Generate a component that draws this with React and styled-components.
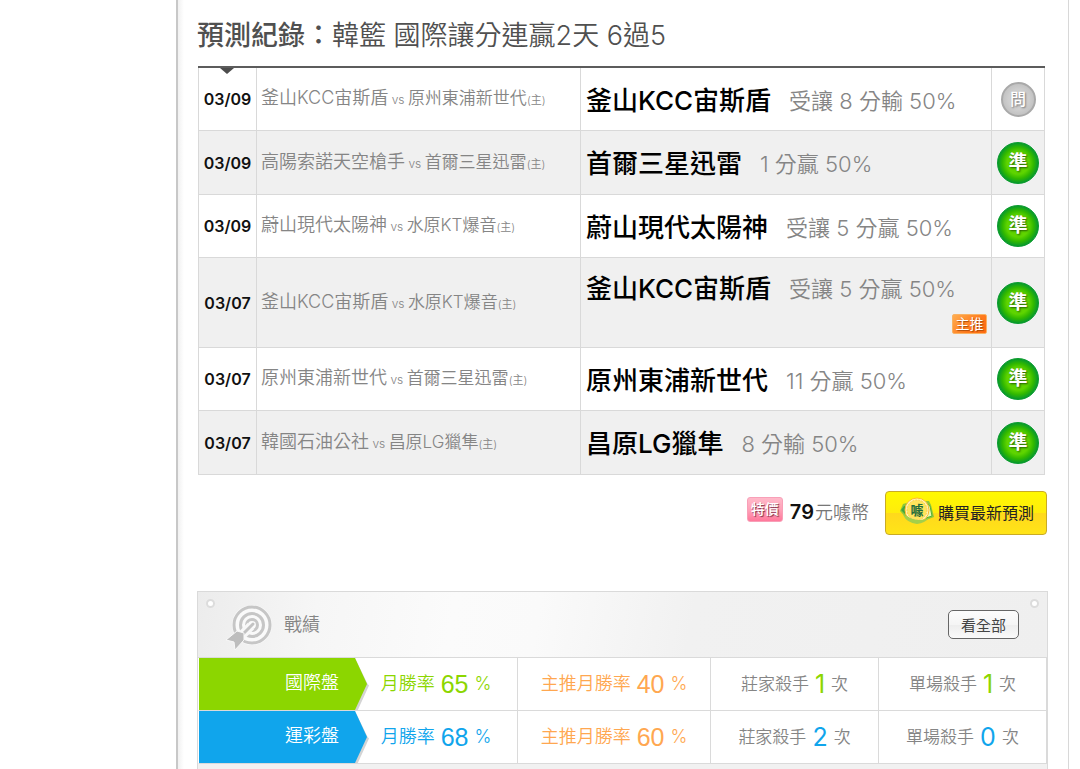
import React from "react";
import styled, { createGlobalStyle } from "styled-components";

const GlobalStyle = createGlobalStyle`
  *, *::before, *::after { box-sizing: border-box; }
  body {
    margin: 0;
    background: #fff;
    color: #858585;
    font-family: Inter, "Noto Sans CJK TC", sans-serif;
    font-weight: 350;
    font-size: 17px;
  }
  table { border-collapse: separate; border-spacing: 0; width: 100%; table-layout: fixed; }
  td, th { padding: 0; font-weight: inherit; }
`;

const Page = styled.div`
  display: flex;
  min-height: 100vh;
  padding: 0 11px 0 176px;
`;

const Main = styled.main`
  flex: 1;
  min-width: 0;
  display: flex;
  flex-direction: column;
  padding: 16px 20px 0 19px;
  border-left: 2px solid #c8c8c8;
  border-right: 1px solid #d8d8d8;
  background: linear-gradient(to right, #f1f1f1, #fff 6px);
`;

const Title = styled.h1`
  margin: 0;
  height: 50px;
  line-height: 40px;
  font-size: 27px;
  font-weight: 350;
  color: #505050;
`;

const Strong = styled.strong`
  font-weight: 500;
`;

const RecordPanel = styled.section`
  position: relative;
  margin: 0 3px 0 1px;
  border-top: 2px solid #5c5c5c;
`;

const Caret = styled.span`
  position: absolute;
  top: 0;
  left: 22px;
  border: 7px solid transparent;
  border-top: 6px solid #4c4c4c;
  border-bottom: 0;
`;

const rowHeight = (p) => (p.$tall ? 90 : p.$shade ? 64 : 63);

const RecordRow = styled.tr`
  height: ${rowHeight}px;
  background: ${(p) => (p.$shade ? "#f0f0f0" : "#fff")};
`;

const RecordCell = styled.td`
  border-right: 1px solid #d9d9d9;
  border-bottom: 1px solid #d9d9d9;
  padding-left: ${(p) => p.$pad || 0}px;
  text-align: ${(p) => p.$align || "left"};
  vertical-align: middle;
  white-space: nowrap;
  line-height: 30px;
  &:first-child { border-left: 1px solid #d9d9d9; }
`;

const DateText = styled.time`
  font-size: 16px;
  font-weight: 600;
  color: #111;
`;

const Home = styled.span`
  font-size: ${(p) => (p.$first ? 18 : 17)}px;
`;

const Small = styled.span`
  font-size: ${(p) => (p.$mark ? 11 : 12)}px;
`;

const PickLine = styled.div`
  display: flex;
  align-items: center;
  gap: 18px;
  padding-top: 3px;
`;

const Pick = styled.strong`
  font-size: 26px;
  font-weight: 500;
  color: #000;
`;

const Detail = styled.span`
  font-size: 22px;
`;

const TagLine = styled.div`
  display: flex;
  justify-content: flex-end;
  padding: 10px 4px 0 0;
`;

const Tag = styled.span`
  width: 35px;
  height: 20px;
  border: 1px solid #f9b263;
  border-radius: 2px;
  background: linear-gradient(135deg, #ffad50, #ff7a1c 60%, #ff6a10);
  color: #fff;
  font-size: 14px;
  font-weight: 400;
  line-height: 17px;
  text-align: center;
  text-shadow: 1px 1px 1px #a84a08;
`;

const Badge = styled.span`
  display: inline-flex;
  align-items: center;
  justify-content: center;
  vertical-align: middle;
  width: ${(p) => (p.$pending ? 35 : 42)}px;
  height: ${(p) => (p.$pending ? 35 : 42)}px;
  border-radius: 50%;
  border: ${(p) => (p.$pending ? "2px solid #a9a9a9" : "1px solid #089a2c")};
  background: ${(p) =>
    p.$pending
      ? "radial-gradient(circle, #cfcfcf 45%, #b4b4b4)"
      : "radial-gradient(circle closest-side, #5fd400 55%, #31b800 78%, #089a2c)"};
  color: #fff;
  font-size: ${(p) => (p.$pending ? 16 : 19)}px;
  font-weight: ${(p) => (p.$pending ? 500 : 700)};
  text-shadow: 1px 1px 2px ${(p) => (p.$pending ? "#777" : "#245c00")};
`;

const BuyBar = styled.div`
  display: flex;
  justify-content: flex-end;
  align-items: center;
  height: 44px;
  margin: 16px 1px 56px 0;
`;

const SaleTag = styled.span`
  width: 36px;
  height: 25px;
  margin: 0 7px 8px 0;
  border: 1px solid #f8a0b8;
  border-radius: 3px;
  background: linear-gradient(#ffb9c9, #ff9fb6 55%, #ff789b);
  color: #fff;
  font-size: 14px;
  font-weight: 500;
  line-height: 22px;
  text-align: center;
  text-shadow: 1px 1px 1px #803048;
`;

const Price = styled.span`
  font-size: 18px;
  line-height: 24px;
  margin-right: 16px;
  padding-bottom: 2px;
  color: #777;
`;

const Amount = styled.strong`
  font-size: 20px;
  font-weight: 600;
  color: #111;
  margin-right: 1px;
`;

const BuyButton = styled.button`
  display: flex;
  align-items: center;
  gap: 2px;
  height: 44px;
  padding: 0 12px 2px 12px;
  border: 1px solid #c9ab25;
  border-radius: 4px;
  background: linear-gradient(#fff900, #ffec0c 50%, #ffd91c 51%, #ffe418);
  color: #222;
  font: inherit;
  font-weight: 400;
  font-size: 16px;
  white-space: nowrap;
`;

const StatsPanel = styled.section`
  flex: 1;
  border: 1px solid #dadada;
  border-bottom: 0;
  background: #f1f1f1;
`;

const StatsHeader = styled.header`
  position: relative;
  display: flex;
  align-items: center;
  height: 66px;
  padding: 0 28px 0 28px;
  border-bottom: 1px solid #dadada;
  background: linear-gradient(100deg, #ececec, #f6f6f6 14%, #fbfbfb 30%, #fafafa 40%, #f1f1f1 58%, #efefef);
`;

const Pin = styled.span`
  position: absolute;
  top: 7px;
  ${(p) => p.$side}: 8px;
  width: 9px;
  height: 9px;
  border: 2px solid #dcdcdc;
  border-radius: 50%;
  background: #fff;
`;

const StatsTitle = styled.h2`
  flex: 1;
  margin: 0 0 0 10px;
  padding-bottom: 3px;
  font-size: 18px;
  font-weight: 350;
`;

const ViewAll = styled.button`
  width: 71px;
  height: 29px;
  padding: 0;
  border: 1px solid #666;
  border-radius: 5px;
  background: linear-gradient(#fcfcfc, #f5f5f5 50%, #ededed 51%, #fafafa);
  color: #444;
  font: inherit;
  font-weight: 400;
  font-size: 15px;
`;

const StatRow = styled.tr`
  height: 53px;
  background: #fff;
`;

const StatCell = styled.td`
  border-right: 1px solid #dadada;
  border-bottom: 1px solid #dadada;
  text-align: center;
  white-space: nowrap;
  color: ${(p) => p.$color};
`;

const Metric = styled.div`
  display: flex;
  align-items: center;
  justify-content: center;
  gap: 6px;
  line-height: 26px;
  font-size: ${(p) => (p.$large ? 18 : 17)}px;
`;

const LabelCell = styled.th`
  position: relative;
  border-bottom: 1px solid #dadada;
  border-left: 1px solid transparent;
  background: ${(p) => p.$color};
  background-clip: padding-box;
  color: #fff;
  font-size: 18px;
  line-height: 26px;
  padding: 0 16px 2px 0;
  text-align: right;
  &::before,
  &::after {
    content: "";
    position: absolute;
    left: 100%;
    top: 0;
    bottom: 0;
    width: 12px;
    background: ${(p) => p.$color};
    clip-path: polygon(0 0, 100% 50%, 0 100%);
  }
  &::before {
    width: 14px;
    background: #d4d4d4;
    clip-path: polygon(0 0, 90% 50%, 100% 53%, 20% 100%, 0 100%);
  }
`;

const Value = styled.span`
  font-size: 25px;
  font-family: ${(p) => (p.$round ? "Inter" : '"Liberation Sans"')}, sans-serif;
  font-weight: 400;
  color: ${(p) => p.$color};
`;

const records = [
  { date: "03/09", a: "釜山KCC宙斯盾", b: "原州東浦新世代", pick: "釜山KCC宙斯盾", detail: "受讓 8 分輸 50%", pending: true },
  { date: "03/09", a: "高陽索諾天空槍手", b: "首爾三星迅雷", pick: "首爾三星迅雷", detail: "1 分贏 50%" },
  { date: "03/09", a: "蔚山現代太陽神", b: "水原KT爆音", pick: "蔚山現代太陽神", detail: "受讓 5 分贏 50%" },
  { date: "03/07", a: "釜山KCC宙斯盾", b: "水原KT爆音", pick: "釜山KCC宙斯盾", detail: "受讓 5 分贏 50%", main: true },
  { date: "03/07", a: "原州東浦新世代", b: "首爾三星迅雷", pick: "原州東浦新世代", detail: "11 分贏 50%" },
  { date: "03/07", a: "韓國石油公社", b: "昌原LG獵隼", pick: "昌原LG獵隼", detail: "8 分輸 50%" },
];

const stats = [
  { label: "國際盤", color: "#8cd600", rate: 65, main: 40, banker: 1, single: 1 },
  { label: "運彩盤", color: "#10a5ec", rate: 68, main: 60, banker: 2, single: 0 },
];

function CoinIcon() {
  return (
    <svg width="38" height="30" viewBox="0 0 38 30" aria-hidden="true">
      <path d="M5 7 L12 5 L31 4 L33 8 L36 20 L28 23 L11 24 L2 14Z" fill="#8fc63a" />
      <path d="M6 9 L12 8 L10 20 L3 13Z" fill="#3fa63e" />
      <path d="M29 7 L32 9 L34 19 L28 21Z" fill="#e9f7b0" stroke="#58b336" />
      <circle cx="19" cy="13" r="12" fill="#fff6b8" stroke="#ffb92e" strokeWidth="1" />
      <circle cx="19" cy="13" r="10" fill="#ffe45c" stroke="#ffc94a" strokeDasharray="2 1" />
      <path d="M5 18 Q9 26 19 27 Q27 26 31 21 Q19 26 9 19Z" fill="#a4cf4a" />
      <text x="19" y="18" textAnchor="middle" fontSize="13" fontWeight="700" fill="#236b3c">噱</text>
    </svg>
  );
}

function TargetIcon() {
  return (
    <svg width="48" height="50" viewBox="0 0 48 50" fill="none" aria-hidden="true">
      <circle cx="26" cy="25" r="20" fill="#fafafa" />
      <g stroke="#c6c6c6" strokeWidth="3">
        <circle cx="26" cy="25" r="18" />
        <circle cx="26" cy="25" r="11.5" />
        <circle cx="26" cy="25" r="5.5" />
      </g>
      <path d="M25 26 L11 40" stroke="#f8f8f8" strokeWidth="9" />
      <path d="M27 24 L11 40" stroke="#c2c2c2" strokeWidth="3" strokeLinecap="round" />
      <path d="M0 40 L11 31 L18 33 L18 40 L9 50 L8 42Z" fill="#bdbdbd" stroke="#f8f8f8" />
    </svg>
  );
}

export default function App() {
  return (
    <>
      <GlobalStyle />
      <Page>
        <Main>
          <Title>
            <Strong>預測紀錄：</Strong>韓籃 國際讓分連贏2天 6過5
          </Title>
          <RecordPanel>
            <Caret />
            <table>
              <colgroup>
                <col style={{ width: "59px" }} />
                <col style={{ width: "324px" }} />
                <col />
                <col style={{ width: "53px" }} />
              </colgroup>
              <tbody>
                {records.map((r, i) => (
                  <RecordRow key={i} $shade={i % 2 === 1} $tall={r.main}>
                    <RecordCell $align="center">
                      <DateText>{r.date}</DateText>
                    </RecordCell>
                    <RecordCell $pad={4}>
                      <Home $first>{r.a}</Home>
                      <Small> vs </Small>
                      <Home>{r.b}</Home>
                      <Small $mark>(主)</Small>
                    </RecordCell>
                    <RecordCell $pad={5}>
                      <PickLine>
                        <Pick>{r.pick}</Pick>
                        <Detail>{r.detail}</Detail>
                      </PickLine>
                      {r.main && (
                        <TagLine>
                          <Tag>主推</Tag>
                        </TagLine>
                      )}
                    </RecordCell>
                    <RecordCell $align="center">
                      <Badge $pending={r.pending}>{r.pending ? "問" : "準"}</Badge>
                    </RecordCell>
                  </RecordRow>
                ))}
              </tbody>
            </table>
          </RecordPanel>
          <BuyBar>
            <SaleTag>特價</SaleTag>
            <Price>
              <Amount>79</Amount>元噱幣
            </Price>
            <BuyButton type="button">
              <CoinIcon />
              購買最新預測
            </BuyButton>
          </BuyBar>
          <StatsPanel>
            <StatsHeader>
              <Pin $side="left" />
              <Pin $side="right" />
              <TargetIcon />
              <StatsTitle>戰績</StatsTitle>
              <ViewAll type="button">看全部</ViewAll>
            </StatsHeader>
            <table>
              <colgroup>
                <col style={{ width: "157px" }} />
                <col style={{ width: "163px" }} />
                <col />
                <col style={{ width: "168px" }} />
                <col style={{ width: "168px" }} />
              </colgroup>
              <tbody>
                {stats.map((s) => (
                  <StatRow key={s.label}>
                    <LabelCell scope="row" $color={s.color}>{s.label}</LabelCell>
                    <StatCell $color={s.color}>
                      <Metric $large>月勝率<Value>{s.rate}</Value>%</Metric>
                    </StatCell>
                    <StatCell $color="#ffa750">
                      <Metric $large>主推月勝率<Value>{s.main}</Value>%</Metric>
                    </StatCell>
                    <StatCell>
                      <Metric>莊家殺手<Value $round $color={s.color}>{s.banker}</Value>次</Metric>
                    </StatCell>
                    <StatCell>
                      <Metric>單場殺手<Value $round $color={s.color}>{s.single}</Value>次</Metric>
                    </StatCell>
                  </StatRow>
                ))}
              </tbody>
            </table>
          </StatsPanel>
        </Main>
      </Page>
    </>
  );
}
